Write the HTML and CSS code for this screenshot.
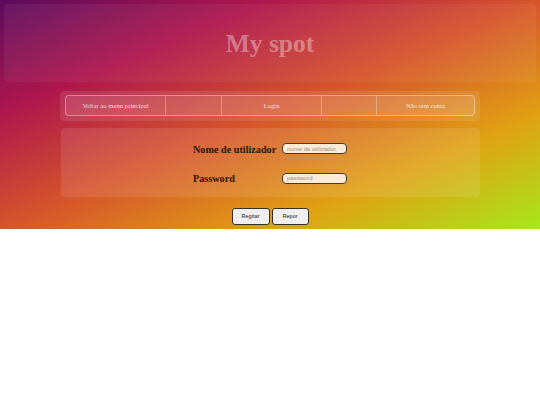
FILE: index.html
```html
<!DOCTYPE html>
<html lang="pt">
<head>
<meta charset="utf-8">
<title>My spot</title>
<link rel="stylesheet" href="styles.css">
</head>
<body>
<div class="page">
  <header class="banner">
    <h1 class="title">My spot</h1>
  </header>
  <nav class="nav">
    <div class="nav-inner">
      <a class="nav-cell" href="#">Voltar ao menu principal</a>
      <span class="nav-cell"></span>
      <a class="nav-cell" href="#">Login</a>
      <span class="nav-cell"></span>
      <a class="nav-cell" href="#">Não tem conta</a>
    </div>
  </nav>
  <form class="form">
    <div class="fields">
      <label class="label" for="user">Nome de utilizador</label>
      <input class="input" id="user" type="text" placeholder="nome de utilizador">
      <label class="label" for="pass">Password</label>
      <input class="input" id="pass" type="password" placeholder="password">
    </div>
  </form>
  <div class="actions">
    <button class="btn btn-reg" type="button">Regitar</button>
    <button class="btn btn-rep" type="button">Repor</button>
  </div>
</div>
</body>
</html>
```
FILE: styles.css
```css
html, body {
  margin: 0;
  padding: 0;
  background: #ffffff;
}

.page {
  height: 229px;
  box-sizing: border-box;
  padding: 4px 4px 0;
  background: linear-gradient(to bottom right, #5c0b5e 0%, #b0174c 25%, #d6552b 50%, #e0a112 75%, #a6e81a 100%);
  font-family: "Liberation Serif", "Times New Roman", serif;
}

.banner {
  height: 78px;
  background: rgba(255, 255, 255, 0.05);
  border-radius: 4px;
  display: flex;
  align-items: center;
  justify-content: center;
}

.title {
  margin: 0;
  font-size: 25.5px;
  font-weight: bold;
  color: rgba(255, 255, 255, 0.36);
  line-height: 1;
  padding-top: 2px;
}

.nav {
  width: 420px;
  box-sizing: border-box;
  margin: 9px auto 0;
  padding: 4px 5px 5px;
  background: rgba(255, 255, 255, 0.1);
  border-radius: 4px;
}

.nav-inner {
  display: grid;
  grid-template-columns: 99px 56px 100px 55px 1fr;
  box-sizing: border-box;
  height: 21px;
  border: 1px solid rgba(255, 255, 255, 0.35);
  border-radius: 4px;
  background: rgba(255, 255, 255, 0.08);
}

.nav-cell {
  display: flex;
  align-items: center;
  justify-content: center;
  font-size: 6.7px;
  color: rgba(255, 255, 255, 0.78);
  text-decoration: none;
  border-left: 1px solid rgba(255, 255, 255, 0.3);
}

.nav-cell:first-child {
  border-left: none;
}

.form {
  width: 419px;
  height: 69px;
  box-sizing: border-box;
  margin: 7px auto 0;
  padding-top: 15px;
  background: rgba(255, 255, 255, 0.1);
  border-radius: 4px;
}

.fields {
  display: grid;
  grid-template-columns: 82px 65px;
  grid-auto-rows: 11px;
  column-gap: 7px;
  row-gap: 18.5px;
  justify-content: center;
  align-items: center;
}

.label {
  font-size: 10.2px;
  font-weight: bold;
  color: #2a1508;
  white-space: nowrap;
  line-height: 11px;
  padding-top: 1px;
}

.input {
  box-sizing: border-box;
  width: 65px;
  height: 11px;
  margin: 0;
  padding: 0 0 0 4px;
  border: 1.5px solid #4a391e;
  border-radius: 4px;
  background: #fbebd6;
  font-family: "Liberation Sans", Arial, sans-serif;
  font-size: 6px;
  color: #333;
  outline: none;
}

.input::placeholder {
  color: #9a8f85;
}

.actions {
  display: flex;
  justify-content: center;
  gap: 2px;
  margin-top: 10.5px;
}

.btn {
  box-sizing: border-box;
  height: 17px;
  margin: 0;
  padding: 0;
  border: 1.5px solid #3a2f1e;
  border-radius: 3px;
  background: #efefef;
  font-family: "Liberation Sans", Arial, sans-serif;
  font-size: 5.6px;
  font-weight: normal;
  color: #222;
}

.btn-reg {
  width: 38px;
}

.btn-rep {
  width: 37px;
}
```
